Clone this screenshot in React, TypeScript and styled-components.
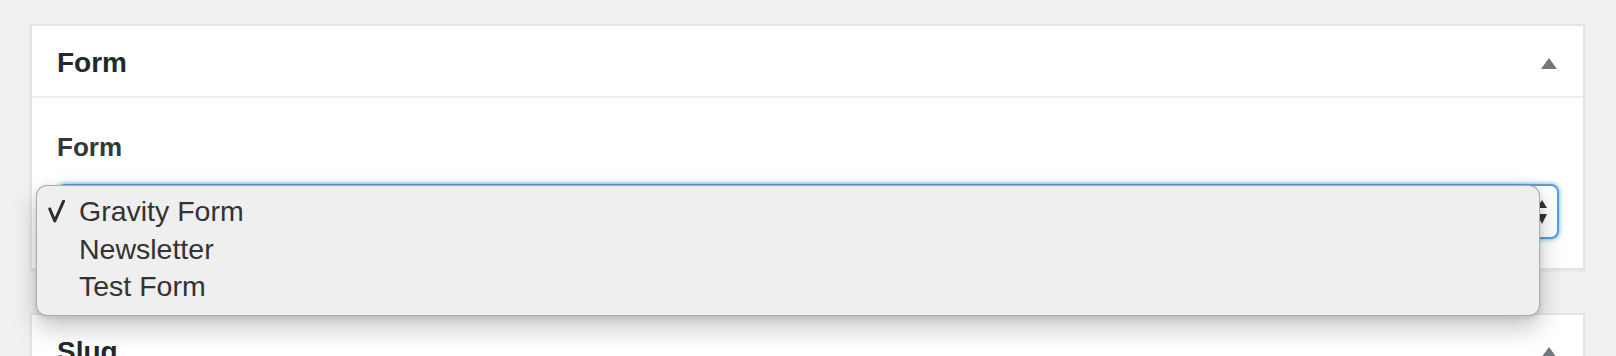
import React from 'react'
import styled, { createGlobalStyle } from 'styled-components'

const GlobalStyle = createGlobalStyle`
  html, body {
    margin: 0;
    padding: 0;
    background: #f1f1f1;
    overflow: hidden;
  }
  body {
    font-family: 'Liberation Sans', Arial, sans-serif;
    color: #23282d;
  }
`

const Page = styled.div`
  padding: 24px 31px 0 30px;
  display: flex;
  flex-direction: column;
  gap: 43px;
`

const Postbox = styled.div`
  background: #fff;
  border: 2px solid #e5e5e5;
  box-shadow: 0 2px 2px rgba(0, 0, 0, 0.04);
`

const Header = styled.div`
  height: 72px;
  box-sizing: border-box;
  padding: 4px 26px 0 25px;
  display: flex;
  align-items: center;
  justify-content: space-between;
  border-bottom: 2px solid #eeeeee;
`

const Title = styled.h2`
  margin: 0;
  font-size: 28px;
  font-weight: 700;
  line-height: 1;
  color: #23282d;
`

const Toggle = styled.span`
  width: 0;
  height: 0;
  border-left: 8px solid transparent;
  border-right: 8px solid transparent;
  border-bottom: 11px solid #72777c;
`

const Inside = styled.div`
  padding: 31px 24px 29px 25px;
`

const Label = styled.div`
  font-size: 26px;
  font-weight: 700;
  line-height: 36px;
  color: #32373c;
  margin-bottom: 19px;
`

const SelectWrap = styled.div`
  position: relative;
`

const SelectBox = styled.div`
  height: 55px;
  box-sizing: border-box;
  border: 2px solid #5b9dd9;
  border-radius: 8px;
  box-shadow: 0 0 5px rgba(30, 140, 190, 0.7);
  background: #fff;
  display: flex;
  align-items: center;
  justify-content: flex-end;
  padding: 0 9px 0 14px;
`

const Popup = styled.ul`
  position: absolute;
  top: 1px;
  left: -21px;
  right: 19px;
  margin: 0;
  list-style: none;
  padding: 7px 0 9px 11px;
  background: #efefef;
  border: 1px solid rgba(0, 0, 0, 0.28);
  border-radius: 11px;
  box-shadow: 0 12px 26px rgba(0, 0, 0, 0.22), 0 2px 6px rgba(0, 0, 0, 0.12);
  z-index: 2;
`

const Option = styled.li`
  display: flex;
  align-items: center;
  height: 37.5px;
  font-size: 28.5px;
  color: #333333;
`

const CheckCell = styled.span`
  width: 31px;
  flex: none;
  display: flex;
  align-items: center;
`

const CheckMark = () => (
  <svg width="17" height="23" viewBox="0 0 17 23">
    <path d="M1.8 9 L6.8 21 L15.6 1.2" fill="none" stroke="#2c2c2c" strokeWidth="3" strokeLinejoin="round" strokeLinecap="round" />
  </svg>
)

const UpDown = () => (
  <svg width="12" height="26" viewBox="0 0 12 26">
    <path d="M1 9 L6 1 L11 9 Z" fill="#333" />
    <path d="M1 15 L6 25 L11 15 Z" fill="#333" />
  </svg>
)

const options = ['Gravity Form', 'Newsletter', 'Test Form']

export default function App() {
  return (
    <>
      <GlobalStyle />
      <Page>
        <Postbox>
          <Header>
            <Title>Form</Title>
            <Toggle />
          </Header>
          <Inside>
            <Label>Form</Label>
            <SelectWrap>
              <SelectBox>
                <UpDown />
              </SelectBox>
              <Popup>
                {options.map((opt, i) => (
                  <Option key={opt}>
                    <CheckCell>{i === 0 && <CheckMark />}</CheckCell>
                    {opt}
                  </Option>
                ))}
              </Popup>
            </SelectWrap>
          </Inside>
        </Postbox>
        <Postbox>
          <Header>
            <Title>Slug</Title>
            <Toggle />
          </Header>
        </Postbox>
      </Page>
    </>
  )
}
